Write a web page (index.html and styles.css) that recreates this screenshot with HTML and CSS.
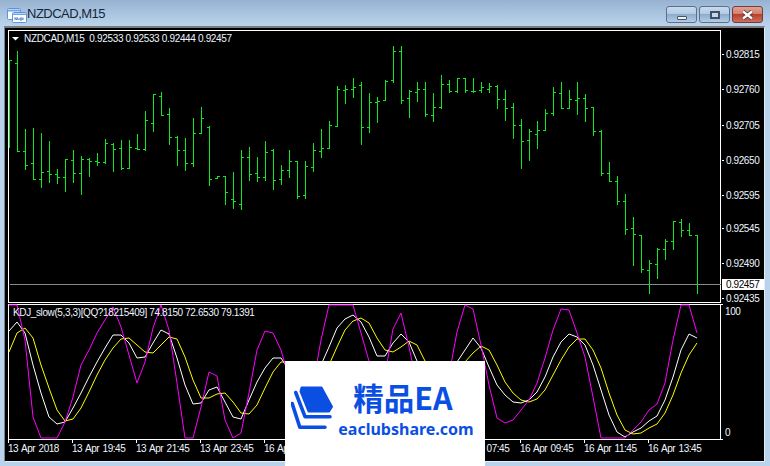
FILE: index.html
```html
<!DOCTYPE html>
<html lang="en">
<head>
<meta charset="utf-8">
<title>NZDCAD,M15</title>
<link rel="stylesheet" href="styles.css">
</head>
<body>
<div class="window">
  <header class="titlebar">
    <svg class="app-icon" width="20" height="15" viewBox="0 0 20 15">
      <rect x="0.5" y="0.5" width="13" height="11" rx="1" class="ic-win"/>
      <path d="M1 1.5H13V3.5H1Z" class="ic-head"/>
      <rect x="5.5" y="4.5" width="14" height="10" rx="1" class="ic-win"/>
      <path d="M6 5.5H19V7H6Z" class="ic-head"/>
      <path d="M8 12V9.5L10 12V9.5L12 12M13 10V12H15V10H13M16 9.5V12" class="ic-glyph"/>
    </svg>
    <span class="title">NZDCAD,M15</span>
    <div class="controls">
      <button class="ctl ctl-min" aria-label="Minimize"><span class="glyph-min"></span></button>
      <button class="ctl ctl-max" aria-label="Maximize"><span class="glyph-max"></span></button>
      <button class="ctl ctl-close" aria-label="Close">
        <svg width="13" height="10" viewBox="0 0 13 10"><path d="M2 1.5L11 8.5M11 1.5L2 8.5" class="x-out"/><path d="M2 1.5L11 8.5M11 1.5L2 8.5" class="x-in"/></svg>
      </button>
    </div>
  </header>
  <main class="frame">
    <svg class="pane pane-main" width="759" height="276" viewBox="5 28 759 276">
      <rect x="8.5" y="30.5" width="712" height="271.5" class="plot-border"/>
      <path d="M12 37H19L15.5 40.5Z" class="legend-arrow"/>
      <text x="24" y="42" class="t legend">NZDCAD,M15  0.92533 0.92533 0.92444 0.92457</text>
      <g transform="translate(.5 .5)">
        <path class="hline" d="M9 284H720"/>
        <path class="bars" d="
M9 60V147M9 60H11
M17 51V151M15 63H17M17 151H19
M25 129V169M23 151H25M25 165H27
M33 128V179M31 163H33M33 179H35
M41 133V187M39 179H41M41 172H43
M49 141V182M47 171H49M49 174H51
M57 169V183M55 174H57M57 177H59
M65 159V191M63 177H65M65 159H67
M73 150V182M71 160H73M73 173H75
M81 156V194M79 173H81M81 159H83
M89 158V176M87 159H89M89 161H91
M97 153V165M95 161H97M97 162H99
M105 139V163M103 162H105M105 143H107
M113 143V171M111 144H113M113 149H115
M121 140V169M119 148H121M121 168H123
M129 140V168M127 168H129M129 147H131
M137 134V149M135 148H137M137 149H139
M145 111V150M143 149H145M145 120H147
M153 94V131M151 123H153M153 94H155
M161 92V115M159 96H161M161 115H163
M169 108V144M167 114H169M169 137H171
M177 136V165M175 137H177M177 150H179
M185 138V170M183 150H185M185 163H187
M193 118V166M191 163H193M193 133H195
M201 107V133M199 133H201M201 118H203
M209 126V185M207 127H209M209 179H211
M217 176V178M215 178H217M217 176H219
M225 176V204M223 176H225M225 192H227
M233 172V208M231 199H233M233 201H235
M241 150V209M239 204H241M241 157H243
M249 147V180M247 157H249M249 174H251
M257 157V181M255 173H257M257 177H259
M265 141V180M263 177H265M265 152H267
M273 149V189M271 150H273M273 180H275
M281 165V184M279 179H281M281 170H283
M289 150V177M287 170H289M289 161H291
M297 161V198M295 161H297M297 196H299
M305 161V198M303 195H305M305 166H307
M313 143V171M311 167H313M313 150H315
M321 129V157M319 151H321M321 148H323
M329 121V148M327 148H329M329 125H331
M337 86V126M335 126H337M337 89H339
M345 85V103M343 90H345M345 89H347
M353 78V97M351 89H353M353 87H355
M361 82V144M359 85H361M361 127H363
M369 93V132M367 127H369M369 102H371
M377 97V122M375 102H377M377 101H379
M385 80V100M383 100H385M385 81H387
M393 46V82M391 80H393M393 51H395
M401 46V103M399 51H401M401 100H403
M409 90V117M407 98H409M409 91H411
M417 82V101M415 92H417M417 89H419
M425 82V116M423 89H425M425 114H427
M433 93V121M431 115H433M433 107H435
M441 75V108M439 107H441M441 84H443
M449 80V92M447 84H449M449 91H451
M457 78V92M455 91H457M457 78H459
M465 78V92M463 78H465M465 90H467
M473 78V92M471 91H473M473 91H475
M481 82V92M479 90H481M481 87H483
M489 83V92M487 89H489M489 86H491
M497 85V108M495 86H497M497 99H499
M505 90V120M503 99H505M505 108H507
M513 103V138M511 107H513M513 125H515
M521 119V168M519 125H521M521 141H523
M529 129V160M527 140H529M529 131H531
M537 121V148M535 134H537M537 130H539
M545 109V130M543 130H545M545 113H547
M553 87V115M551 113H553M553 92H555
M561 82V108M559 93H561M561 108H563
M569 90V108M567 108H569M569 99H571
M577 82V114M575 100H577M577 98H579
M585 94V121M583 98H585M585 108H587
M593 107V135M591 107H593M593 131H595
M601 130V175M599 131H601M601 173H603
M609 162V181M607 173H609M609 181H611
M617 176V204M615 181H617M617 201H619
M625 194V234M623 201H625M625 229H627
M633 217V265M631 228H633M633 234H635
M641 235V272M639 235H641M641 269H643
M649 260V293M647 270H649M649 263H651
M657 248V278M655 264H657M657 249H659
M665 239V259M663 249H665M665 241H667
M673 221V249M671 241H673M673 221H675
M681 219V236M679 222H681M681 230H683
M689 223V235M687 230H689M689 235H691
M697 235V293M695 235H697"/>
        <path class="ticks" d="M721 54H723M721 89H723M721 125H723M721 160H723M721 195H723M721 228H723M721 263H723M721 298H723"/>
      </g>
      <text x="726" y="58" class="t price">0.92815</text>
      <text x="726" y="93" class="t price">0.92760</text>
      <text x="726" y="129" class="t price">0.92705</text>
      <text x="726" y="164" class="t price">0.92650</text>
      <text x="726" y="199" class="t price">0.92595</text>
      <text x="726" y="232" class="t price">0.92545</text>
      <text x="726" y="267" class="t price">0.92490</text>
      <text x="726" y="302" class="t price">0.92435</text>
      <rect x="722" y="279" width="42" height="11" class="price-box"/>
      <text x="726" y="288" class="t price price-current">0.92457</text>
    </svg>
    <svg class="pane pane-ind" width="759" height="136" viewBox="5 304 759 136">
      <rect x="8.5" y="304.5" width="712" height="134.5" class="plot-border"/>
      <path class="ticks" d="M721 304.5H723M721 439H723"/>
      <polyline class="line-d" points="9,352 17,333 25,328 33,338 41,365 49,388 57,410 65,421 73,419 81,408 89,392 97,375 105,360 113,348 121,339 129,338 137,345 145,352 153,353 161,345 169,337 177,339 185,357 193,380 201,398 209,398 217,394 225,393 233,402 241,413 249,414 257,405 265,388 273,372 281,362 289,362 297,375 305,392 313,395 321,385 329,365 337,347 345,330 353,321 361,318 369,323 377,338 385,350 393,352 401,347 409,341 417,345 425,361 433,385 441,400 449,395 457,380 465,362 473,353 481,346 489,350 497,365 505,382 513,393 521,400 529,402 537,399 545,390 553,375 561,360 569,347 577,339 585,339 593,350 601,368 609,393 617,415 625,430 633,434 641,433 649,428 657,424 665,413 673,395 681,373 689,355 697,343"/>
      <polyline class="line-k" points="9,331 17,322 25,333 33,365 41,393 49,417 57,424 65,422 73,408 81,393 89,377 97,362 105,348 113,335 121,335 129,343 137,358 145,357 153,343 161,330 169,334 177,358 185,385 193,404 201,403 209,390 217,387 225,402 233,417 241,419 249,400 257,382 265,368 273,358 281,358 289,370 297,385 305,392 313,385 321,365 329,347 337,328 345,319 353,315 361,322 369,337 377,356 385,356 393,343 401,334 409,342 417,361 425,385 433,400 441,395 449,380 457,362 465,350 473,338 481,348 489,367 497,385 505,395 513,402 521,403 529,400 537,392 545,377 553,357 561,342 569,334 577,337 585,345 593,365 601,390 609,415 617,432 625,437 633,432 641,428 649,421 657,416 665,400 673,377 681,350 689,334 697,338"/>
      <polyline class="line-j" points="9,305 17,305 25,340 33,417 41,438 49,438 57,438 65,422 73,397 81,365 89,350 97,333 105,320 113,307 121,327 129,355 137,383 145,362 153,328 161,305 169,330 177,383 185,438 193,438 201,407 209,372 217,376 225,420 233,438 241,433 249,393 257,350 265,331 273,333 281,350 289,378 297,400 305,405 313,385 321,340 329,305 337,305 345,305 353,305 361,333 369,361 377,395 385,375 393,329 401,313 409,347 417,385 425,410 433,420 441,405 449,375 457,332 465,305 473,309 481,345 489,385 497,418 505,423 513,420 521,410 529,400 537,383 545,358 553,330 561,309 569,310 577,333 585,357 593,397 601,438 609,438 617,438 625,438 633,430 641,422 649,410 657,404 665,383 673,340 681,305 689,305 697,333"/>
      <text x="13" y="316" class="t legend-ind">KDJ_slow(5,3,3)[QQ?18215409] 74.8150 72.6530 79.1391</text>
      <text x="725" y="315" class="t price">100</text>
      <text x="725" y="436" class="t price">0</text>
    </svg>
    <div class="time-axis">
      <span class="time">13 Apr 2018</span>
      <span class="time">13 Apr 19:45</span>
      <span class="time">13 Apr 21:45</span>
      <span class="time">13 Apr 23:45</span>
      <span class="time">16 Apr 01:45</span>
      <span class="time">16 Apr 03:45</span>
      <span class="time">16 Apr 05:45</span>
      <span class="time">16 Apr 07:45</span>
      <span class="time">16 Apr 09:45</span>
      <span class="time">16 Apr 11:45</span>
      <span class="time">16 Apr 13:45</span>
    </div>
  </main>
  <aside class="logo">
    <svg class="logo-mark" width="44" height="44" viewBox="0 0 44 44">
      <path d="M10.5 1.5H30.5L41 20.7L38 25.5H17.5L9.5 5.5Z" class="mark-top"/>
      <path d="M4.7 6.5L14 30.7H39" class="mark-line"/>
      <path d="M1.2 17.5L8.8 41.2H34" class="mark-line"/>
    </svg>
    <div class="logo-text">
      <span class="logo-name">精品EA</span>
      <span class="logo-url">eaclubshare.com</span>
    </div>
  </aside>
</div>
</body>
</html>
```
FILE: styles.css
```css
* { box-sizing: border-box; }
html, body { margin: 0; padding: 0; background: #b9d3ec; overflow: hidden; }
.window {
  position: relative;
  width: 770px;
  height: 466px;
  display: flex;
  flex-direction: column;
  background: #b9d3ec;
  font-family: "Liberation Sans", sans-serif;
}
.titlebar {
  height: 26px;
  display: flex;
  align-items: flex-start;
  background: linear-gradient(#97b3d1, #bbd4ed);
  padding-left: 7px;
}
.app-icon { margin-top: 8px; }
.ic-win { fill: #fff; stroke: #5b95e0; }
.ic-head { fill: #6fa5e8; }
.ic-glyph { fill: none; stroke: #3f78c4; stroke-width: .9; }
.title {
  margin-top: 6px;
  font-size: 13px;
  line-height: 16px;
  letter-spacing: -.5px;
  color: #14263c;
}
.controls { margin-left: auto; margin-top: 6px; margin-right: 7px; display: flex; gap: 2px; }
.ctl {
  width: 31px;
  height: 17px;
  padding: 0;
  border: 1px solid #5d6f8c;
  border-radius: 3px;
  display: flex;
  align-items: center;
  justify-content: center;
  background: linear-gradient(#c9dbee 0%, #b2cae3 45%, #8daccd 50%, #b4cde6 100%);
}
.ctl-close { background: linear-gradient(#e0a193 0%, #d37f6e 45%, #b9402c 50%, #cc6f5c 100%); border-color: #6e3d44; }
.glyph-min { width: 10px; height: 4px; margin-top: 7px; background: #eef3f8; border: 1px solid #43536b; border-radius: 1px; }
.glyph-max { width: 10px; height: 8px; background: #c4d6e8; border: 2px solid #3f4f68; }
.x-out { fill: none; stroke: #4d3138; stroke-width: 4; }
.x-in { fill: none; stroke: #fff; stroke-width: 2.4; }
.frame {
  width: 761px;
  height: 436px;
  margin-left: 4px;
  background: #000;
  border-top: 2px solid #7c7c7c;
  border-left: 1px solid #7b8794;
  border-right: 1px solid #e4eef8;
  border-bottom: 1px solid #e4eef8;
  display: flex;
  flex-direction: column;
}
.pane { display: block; flex: none; }
.plot-border { fill: none; stroke: #fff; stroke-width: 1; shape-rendering: crispEdges; }
.legend-arrow { fill: #fff; }
.t { font-family: "Liberation Sans", sans-serif; font-size: 10px; fill: #eef5ff; white-space: pre; }
.legend { letter-spacing: -.34px; }
.legend-ind { letter-spacing: -.38px; }
.price { letter-spacing: -.4px; }
.price-current { fill: #000; }
.price-box { fill: #fff; }
.hline { stroke: #7f8a92; fill: none; shape-rendering: crispEdges; }
.bars { stroke: #0ee81e; fill: none; stroke-linecap: square; shape-rendering: crispEdges; }
.ticks { stroke: #fff; fill: none; shape-rendering: crispEdges; }
.line-j, .line-k, .line-d { fill: none; stroke-width: 1; stroke-linejoin: bevel; }
.line-j { stroke: #f0f; }
.line-k { stroke: #fff; }
.line-d { stroke: #ff0; }
.time-axis { display: flex; padding-left: 3px; height: 21px; flex: none; }
.time {
  width: 64px;
  flex: none;
  font-size: 10px;
  line-height: 12px;
  letter-spacing: -.45px;
  word-spacing: 1px;
  color: #eef5ff;
  white-space: nowrap;
}
.time::before { content: ""; display: block; width: 1px; height: 3px; background: #fff; }
.logo {
  position: absolute;
  left: 285px;
  top: 361px;
  width: 200px;
  height: 105px;
  background: #fff;
  display: flex;
  align-items: flex-start;
  padding: 19px 0 0 6px;
  color: #0b4fe2;
}
.logo-mark { flex: none; margin-top: 6px; }
.mark-top { fill: #0b4fe2; stroke: #0b4fe2; stroke-width: 2; stroke-linejoin: round; }
.mark-line { fill: none; stroke: #0b4fe2; stroke-width: 3.6; stroke-linejoin: round; stroke-linecap: round; }
.logo-text { display: flex; flex-direction: column; align-items: center; margin-left: 4px; width: 134px; }
.logo-name { font-family: "Noto Sans CJK SC", "Noto Sans", sans-serif; font-weight: 700; font-size: 30.5px; line-height: 34px; margin-right: 6px; }
.logo-url { font-family: "Noto Sans", sans-serif; font-weight: 700; font-size: 16px; line-height: 18px; margin-top: 6px; white-space: nowrap; }
```
